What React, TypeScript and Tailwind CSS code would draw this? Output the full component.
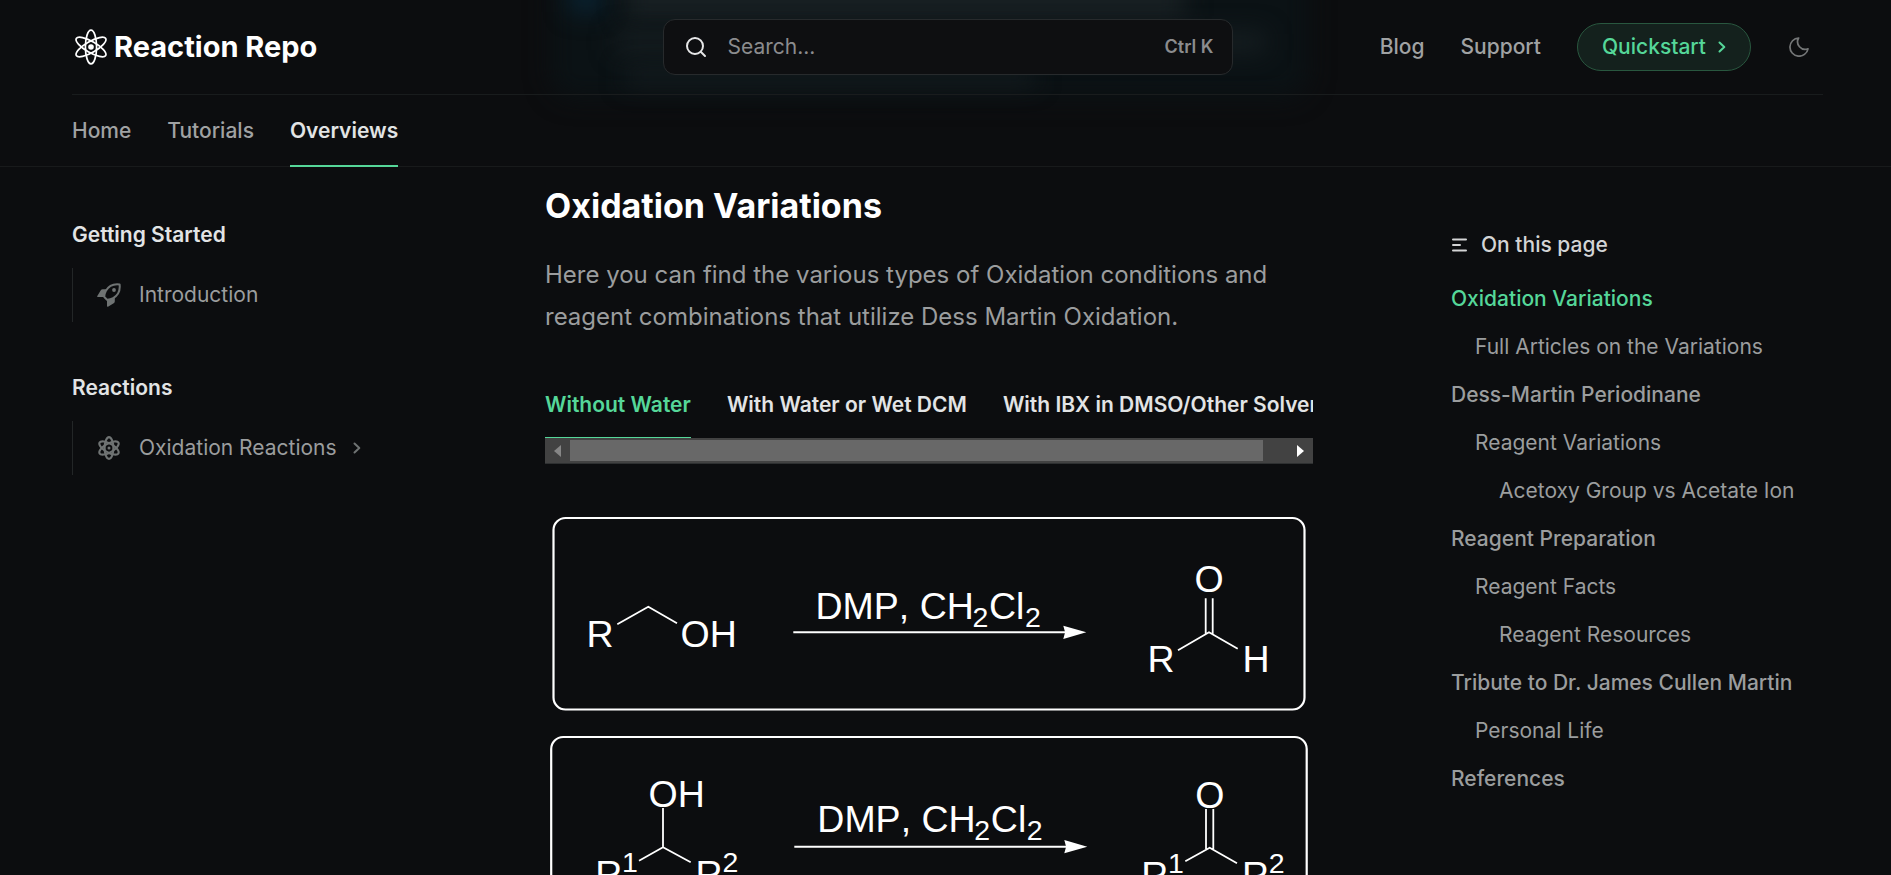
import React from "react";

type TocItem = { label: string; level: 0 | 1 | 2; active?: boolean };

const toc: TocItem[] = [
  { label: "Oxidation Variations", level: 0, active: true },
  { label: "Full Articles on the Variations", level: 1 },
  { label: "Dess-Martin Periodinane", level: 0 },
  { label: "Reagent Variations", level: 1 },
  { label: "Acetoxy Group vs Acetate Ion", level: 2 },
  { label: "Reagent Preparation", level: 0 },
  { label: "Reagent Facts", level: 1 },
  { label: "Reagent Resources", level: 2 },
  { label: "Tribute to Dr. James Cullen Martin", level: 0 },
  { label: "Personal Life", level: 1 },
  { label: "References", level: 0 },
];

const levelClass = ["font-medium", "pl-6", "pl-12"];

const variations = [
  "Without Water",
  "With Water or Wet DCM",
  "With IBX in DMSO/Other Solvents",
];

function AtomLogo() {
  return (
    <svg aria-hidden="true" className="h-9 w-[34px] shrink-0" viewBox="0 0 34 36" fill="none" stroke="currentColor" strokeWidth="1.7">
      <ellipse cx="17" cy="18" rx="5.6" ry="16.8" />
      <ellipse cx="17" cy="18" rx="5.6" ry="17" transform="rotate(60 17 18)" />
      <ellipse cx="17" cy="18" rx="5.6" ry="17" transform="rotate(-60 17 18)" />
      <circle cx="17" cy="18" r="2.8" fill="currentColor" stroke="none" />
    </svg>
  );
}

function AtomIcon() {
  return (
    <svg aria-hidden="true" className="size-6 shrink-0" viewBox="0 0 24 24" fill="none" stroke="currentColor" strokeWidth="2.1">
      <ellipse cx="12" cy="12" rx="4.4" ry="10.9" />
      <ellipse cx="12" cy="12" rx="4.4" ry="10.9" transform="rotate(60 12 12)" />
      <ellipse cx="12" cy="12" rx="4.4" ry="10.9" transform="rotate(-60 12 12)" />
      <circle cx="12" cy="12" r="1.5" fill="currentColor" stroke="none" />
    </svg>
  );
}

function Chevron() {
  return (
    <svg aria-hidden="true" className="h-3 w-2 shrink-0" viewBox="0 0 8 12" fill="none" stroke="currentColor" strokeWidth="2" strokeLinecap="round" strokeLinejoin="round">
      <path d="M1.5 1.5 6.3 6l-4.8 4.5" />
    </svg>
  );
}

function RocketIcon() {
  return (
    <svg aria-hidden="true" className="size-6 shrink-0" viewBox="0 0 24 24" fill="currentColor">
      <path d="M9.6 6.2H5.7c-.9 0-1.500.4-1.900 1.100L.3 13c-.3.6 0 1 .6 1h6.400c.2-2.900 1-5.500 2.300-7.800Z" />
      <path d="M17.800 14.400v3.900c0 .9-.4 1.500-1.100 1.900L11 23.700c-.6.3-1 0-1-.6v-6.400c2.900-.2 5.500-1 7.800-2.300Z" />
      <path d="M22.600 1.400C16 .6 11.600 2.900 8.900 7.800c-1.200 2.200-1.700 4.200-1.600 6.200l2.700 2.700c2 .1 4-.4 6.200-1.600 4.900-2.700 7.200-7.100 6.400-13.700Z" fill="none" stroke="currentColor" strokeWidth="2" strokeLinejoin="round" />
      <circle cx="17" cy="7" r="1.9" />
    </svg>
  );
}

function SearchIcon() {
  return (
    <svg aria-hidden="true" className="size-6 shrink-0" viewBox="0 0 24 24" fill="none" stroke="currentColor" strokeWidth="2" strokeLinecap="round">
      <circle cx="11" cy="11" r="8" />
      <path d="m17 17 4 4" />
    </svg>
  );
}

function MoonIcon() {
  return (
    <svg aria-hidden="true" className="size-5" viewBox="0 0 20 20" fill="none" stroke="currentColor" strokeWidth="1.7" strokeLinejoin="round">
      <path d="M9.600 1A9.100 9.100 0 1 0 19 11.800 7.600 7.600 0 0 1 9.600 1Z" />
    </svg>
  );
}

function ListIcon() {
  return (
    <svg aria-hidden="true" className="h-4 w-4 shrink-0" viewBox="0 0 16 16" stroke="currentColor" strokeWidth="2" strokeLinecap="round">
      <path d="M2 2.500h13M2 8h7M2 13.500h13" />
    </svg>
  );
}

function Reagents({ x, y }: { x: number; y: number }) {
  return (
    <text x={x} y={y}>
      DMP, CH
      <tspan x={x + 157} dy="8" fontSize="28.5">2</tspan>
      <tspan x={x + 173.5} dy="-8">Cl</tspan>
      <tspan x={x + 209.5} dy="8" fontSize="28.5">2</tspan>
    </text>
  );
}

function Arrow({ x, y }: { x: number; y: number }) {
  return (
    <g transform={`translate(${x} ${y})`}>
      <path d="M0 0h274" stroke="currentColor" strokeWidth="2" />
      <path d="M270-6.600 293 0 270 6.600 271.800 0Z" />
    </g>
  );
}

const figureClass =
  "block w-full fill-white text-white [font-family:'Liberation_Sans',Arial,sans-serif] [font-kerning:none]";

function PrimaryAlcoholScheme() {
  return (
    <svg role="img" aria-label="Oxidation of a primary alcohol to an aldehyde" viewBox="0 0 768 218" fontSize="37.5" className={figureClass}>
      <rect x="8.500" y="13" width="751" height="191.500" rx="12" fill="none" stroke="currentColor" strokeWidth="2.200" />
      <text x="41.500" y="141.700">R</text>
      <path d="m72.300 119.300 31-17.600 28.700 16.600" fill="none" stroke="currentColor" strokeWidth="1.800" />
      <text x="135.500" y="141.700">OH</text>
      <Reagents x={270.5} y={113.7} />
      <Arrow x={248.3} y={127.3} />
      <text x="649.500" y="87">O</text>
      <path d="M660.700 93.300v36M667.700 93.300v36M633 145.300l31-18 28.700 16.400" fill="none" stroke="currentColor" strokeWidth="1.800" />
      <text x="602.600" y="166.700">R</text>
      <text x="697.500" y="166.700">H</text>
    </svg>
  );
}

function SecondaryAlcoholScheme() {
  return (
    <svg role="img" aria-label="Oxidation of a secondary alcohol to a ketone" viewBox="0 0 768 220" fontSize="37.5" className={figureClass}>
      <rect x="6.200" y="14" width="755.500" height="192" rx="12" fill="none" stroke="currentColor" strokeWidth="2.200" />
      <text x="103.500" y="84">OH</text>
      <path d="M118 85v39.300M94 137.700l24-13.400 27.700 15" fill="none" stroke="currentColor" strokeWidth="1.800" />
      <text x="50.200" y="164.200">R</text>
      <text x="77" y="149" fontSize="28.5">1</text>
      <text x="150.500" y="164.200">R</text>
      <text x="177.500" y="149" fontSize="28.5">2</text>
      <Reagents x={272.3} y={109} />
      <Arrow x={249.3} y={123.7} />
      <text x="650.200" y="84.600">O</text>
      <path d="M661 86v40M668.300 86v40M640.300 138.300l24.400-13.600 27.300 15.600" fill="none" stroke="currentColor" strokeWidth="1.800" />
      <text x="596.200" y="165">R</text>
      <text x="623" y="149.500" fontSize="28.5">1</text>
      <text x="697" y="165">R</text>
      <text x="723.700" y="149.500" fontSize="28.5">2</text>
    </svg>
  );
}

function HeaderGlow() {
  return (
    <div aria-hidden="true" className="pointer-events-none absolute inset-0 overflow-hidden">
      <div className="absolute -top-16 right-[582px] left-[550px] h-[162px] rounded-3xl bg-[#0b1215] blur-md" />
      <div className="absolute -top-4 left-[570px] h-7 w-8 bg-[#092434] blur-md" />
      <div className="absolute -top-3 left-[625px] h-7 w-[560px] bg-[#1b2326] blur-md" />
      <div className="absolute top-8 left-[615px] h-5 w-[650px] bg-[#171f22] blur-md" />
      <div className="absolute top-[68px] left-[625px] h-4 w-[410px] bg-[#151d20] blur-md" />
    </div>
  );
}

function Header() {
  return (
    <header className="relative shrink-0 border-b border-[#181a1b]">
      <HeaderGlow />
      <div className="relative pr-[68px] pl-[72px]">
        <div className="flex h-[95px] items-center border-b border-[#191c1d]">
          <div className="flex-1">
            <a href="#home" className="flex w-fit items-center gap-1.5 pl-[2px] text-[29px] leading-9 font-bold text-white">
              <AtomLogo />
              <span>Reaction Repo</span>
            </a>
          </div>
          <label className="flex h-14 w-[570px] items-center gap-5 rounded-xl border border-[#272a2c] bg-[#0e0f11] pr-[18px] pl-5 text-[#e6e7e8]">
            <SearchIcon />
            <input type="text" aria-label="Search" placeholder="Search..." className="min-w-0 flex-1 bg-transparent outline-none placeholder:text-[#8b8c8e]" />
            <span className="text-[18px] font-semibold text-[#8b8c8e]">Ctrl K</span>
          </label>
          <nav className="flex flex-1 items-center justify-end gap-9 font-medium text-[#a0a2a3]">
            <a href="#blog">Blog</a>
            <a href="#support">Support</a>
            <a href="#quickstart" className="flex h-12 items-center gap-3 rounded-full border border-[#29573f] bg-[#14211d] px-6 text-[#55d799]">
              Quickstart
              <Chevron />
            </a>
            <button type="button" aria-label="Toggle dark mode" className="pr-[14px] pl-0.5 text-[#747677]">
              <MoonIcon />
            </button>
          </nav>
        </div>
        <nav className="flex h-[71px] gap-9 text-[#a0a2a3]">
          <a href="#home" className="flex items-center font-medium">Home</a>
          <a href="#tutorials" className="flex items-center font-medium">Tutorials</a>
          <a href="#overviews" className="-mb-px flex items-center border-b-2 border-[#55d799] pt-0.5 font-semibold text-[#e2e4e5]">Overviews</a>
        </nav>
      </div>
    </header>
  );
}

function SidebarGroup({ title, children }: { title: string; children: React.ReactNode }) {
  return (
    <section>
      <h5 className="leading-9 font-semibold text-[#e2e4e5]">{title}</h5>
      <div className="mt-[15px] border-l border-[#232627]">{children}</div>
    </section>
  );
}

function Sidebar() {
  return (
    <aside className="w-[473px] shrink-0 pt-[50px]">
      <nav className="flex flex-col gap-12 text-[#9b9d9e]">
        <SidebarGroup title="Getting Started">
          <a href="#introduction" className="flex h-[54px] items-center gap-[18px] pl-6">
            <span className="text-[#6f7373]"><RocketIcon /></span>
            Introduction
          </a>
        </SidebarGroup>
        <SidebarGroup title="Reactions">
          <a href="#oxidation-reactions" className="flex h-[54px] items-center gap-4 pl-6">
            <span className="mr-0.5 text-[#6f7373]"><AtomIcon /></span>
            Oxidation Reactions
            <span className="text-[#6f7373]"><Chevron /></span>
          </a>
        </SidebarGroup>
      </nav>
    </aside>
  );
}

function VariationTabs() {
  return (
    <div className="mt-[42px]">
      <div role="tablist" className="flex gap-9 overflow-hidden font-semibold whitespace-nowrap text-[#e2e4e5]">
        {variations.map((name, i) => (
          <button
            key={name}
            type="button"
            role="tab"
            aria-selected={i === 0}
            className={
              i === 0
                ? "h-[58px] shrink-0 border-b border-[#55d799] pb-2 text-[#55d799]"
                : "h-[58px] shrink-0 border-b border-transparent pb-2"
            }
          >
            {name}
          </button>
        ))}
      </div>
      <div className="flex h-[26px] items-center border-b border-[#2e3031] bg-[#424242]">
        <button type="button" aria-label="Scroll left" className="flex w-[25px] justify-center text-[#868686]">
          <svg className="h-3 w-[7px]" viewBox="0 0 7 12" fill="currentColor"><path d="M7 0v12L0 6Z" /></svg>
        </button>
        <div className="flex-1">
          <div className="h-[21px] w-[96.5%] bg-[#686868]" />
        </div>
        <button type="button" aria-label="Scroll right" className="flex w-[25px] justify-center text-white">
          <svg className="h-3 w-[7px]" viewBox="0 0 7 12" fill="currentColor"><path d="M0 0v12l7-6Z" /></svg>
        </button>
      </div>
    </div>
  );
}

function Article() {
  return (
    <main className="min-w-0 flex-1 pt-[15px]">
      <h2 className="text-[34px] leading-[48px] font-bold text-white">Oxidation Variations</h2>
      <p className="mt-6 text-[24px] leading-[42px] text-[#9b9d9e]">
        Here you can find the various types of Oxidation conditions and reagent combinations that utilize Dess Martin Oxidation.
      </p>
      <VariationTabs />
      <div className="mt-[41px]">
        <PrimaryAlcoholScheme />
        <SecondaryAlcoholScheme />
      </div>
    </main>
  );
}

function TableOfContents() {
  return (
    <aside className="w-[372px] shrink-0 pt-[60px] text-[#9b9d9e]">
      <h5 className="flex items-center gap-[14px] leading-9 font-medium text-[#d3d4d5]">
        <ListIcon />
        On this page
      </h5>
      <ul className="mt-3">
        {toc.map((item) => (
          <li key={item.label} className={`${levelClass[item.level]} leading-[48px] whitespace-nowrap`}>
            <a href="#section" className={item.active ? "text-[#55d799]" : ""}>{item.label}</a>
          </li>
        ))}
      </ul>
    </aside>
  );
}

export default function App() {
  return (
    <div className="flex h-screen flex-col overflow-hidden bg-[#0c0d0f] text-[21px] leading-[30px] antialiased [font-family:Inter,sans-serif]">
      <Header />
      <div className="flex min-h-0 flex-1 overflow-hidden pr-[68px] pl-[72px]">
        <Sidebar />
        <Article />
        <div className="w-[138px] shrink-0" />
        <TableOfContents />
      </div>
    </div>
  );
}
